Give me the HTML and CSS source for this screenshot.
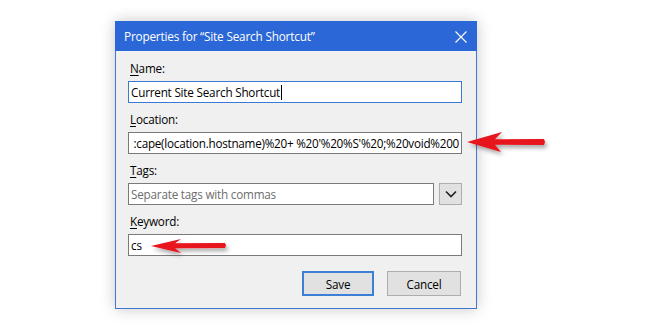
FILE: index.html
```html
<!DOCTYPE html>
<html>
<head>
<meta charset="utf-8">
<link rel="stylesheet" href="styles.css">
</head>
<body>
<div class="page">
  <div class="dialog">
    <div class="titlebar">
      <span class="title">Properties for “Site Search Shortcut”</span>
      <svg class="close" width="12" height="12" viewBox="0 0 12 12"><path d="M0.5 0.5 L11.5 11.5 M11.5 0.5 L0.5 11.5" stroke="#fff" stroke-width="1.1" fill="none"/></svg>
    </div>
    <div class="body">
      <div class="field">
        <div class="label"><u>N</u>ame:</div>
        <div class="input focused"><span class="value">Current Site Search Shortcut</span><span class="caret"></span></div>
      </div>
      <div class="field">
        <div class="label"><u>L</u>ocation:</div>
        <div class="input clip"><span class="value loc">:cape(location.hostname)%20+ %20'%20%S'%20;%20void%200</span></div>
      </div>
      <div class="field">
        <div class="label"><u>T</u>ags:</div>
        <div class="row">
          <div class="input grow"><span class="placeholder">Separate tags with commas</span></div>
          <div class="dropbtn"><svg width="12" height="8" viewBox="0 0 12 8"><path d="M1 1.5 L6 6.5 L11 1.5" stroke="#222" stroke-width="1.6" fill="none"/></svg></div>
        </div>
      </div>
      <div class="field">
        <div class="label"><u>K</u>eyword:</div>
        <div class="input"><span class="value">cs</span></div>
      </div>
      <div class="buttons">
        <div class="btn default">Save</div>
        <div class="btn">Cancel</div>
      </div>
    </div>
  </div>
</div>
<svg class="arrows" width="650" height="333" viewBox="0 0 650 333">
  <defs>
    <filter id="sh" x="-20%" y="-50%" width="150%" height="250%">
      <feDropShadow dx="2" dy="3" stdDeviation="2" flood-color="#000" flood-opacity="0.35"/>
    </filter>
  </defs>
  <path filter="url(#sh)" fill="#e8131b" d="M467 142 L502 132 L495 139.3 L544 139 L545 142 L544 145 L495 144.7 L501 152 Z"/>
  <path filter="url(#sh)" fill="#e8131b" d="M151 246 L181 239 L175 243.3 L225 243 L226 245.5 L225 248 L175 248.2 L181 253 Z"/>
</svg>
</body>
</html>
```
FILE: styles.css
```css
html, body {
  margin: 0;
  padding: 0;
  background: #ffffff;
}
body {
  width: 650px;
  height: 333px;
  overflow: hidden;
  position: relative;
  font-family: "Open Sans", "Noto Sans", sans-serif;
  font-size: 11.7px;
  letter-spacing: -0.2px;
  color: #000;
}
.page {
  padding: 21px 0 0 115px;
}
.dialog {
  width: 362px;
  height: 288px;
  box-sizing: border-box;
  border: 1px solid #3f78d3;
  border-top: none;
  background: #f0f0f0;
  box-shadow: 0 0 14px rgba(0, 0, 0, 0.22);
  display: flex;
  flex-direction: column;
}
.titlebar {
  height: 30px;
  background: #2b67d6;
  margin: 0 -1px;
  display: flex;
  align-items: center;
  justify-content: space-between;
  padding: 0 10px 0 9px;
  color: #fff;
}
.title {
  font-size: 11.8px;
}
.close {
  display: block;
  margin-top: 1px;
}
.body {
  padding: 9px 14px 0 12px;
  display: flex;
  flex-direction: column;
}
.field {
  display: flex;
  flex-direction: column;
  margin-bottom: 8px;
}
.label {
  height: 16px;
  line-height: 16px;
  padding-left: 2px;
  margin-bottom: 5px;
}
.label u {
  text-decoration-thickness: 1px;
  text-underline-offset: 2px;
}
.input {
  height: 22px;
  box-sizing: border-box;
  border: 1px solid #7a7a7a;
  background: #fff;
  display: flex;
  align-items: center;
  padding: 0 2px;
  white-space: nowrap;
  overflow: hidden;
}
.input.focused {
  border-color: #3b79d6;
}
.input.clip {
  justify-content: flex-end;
}
.loc {
  letter-spacing: -0.25px;
}
.caret {
  display: inline-block;
  width: 1px;
  height: 15px;
  background: #000;
  margin-left: 1px;
}
.placeholder {
  color: #6d6d6d;
}
.row {
  display: flex;
  gap: 5px;
}
.grow {
  flex: 1;
}
.dropbtn {
  width: 23px;
  height: 22px;
  box-sizing: border-box;
  border: 1px solid #adadad;
  background: #e1e1e1;
  display: flex;
  align-items: center;
  justify-content: center;
}
.buttons {
  display: flex;
  justify-content: flex-end;
  gap: 13px;
  margin-top: 7px;
  padding-right: 1px;
}
.btn {
  width: 74px;
  height: 25px;
  box-sizing: border-box;
  border: 1px solid #adadad;
  background: #e1e1e1;
  display: flex;
  align-items: center;
  justify-content: center;
}
.btn.default {
  width: 72px;
  border: 2px solid #3b7fd6;
}
.arrows {
  position: absolute;
  left: 0;
  top: 0;
}
```
